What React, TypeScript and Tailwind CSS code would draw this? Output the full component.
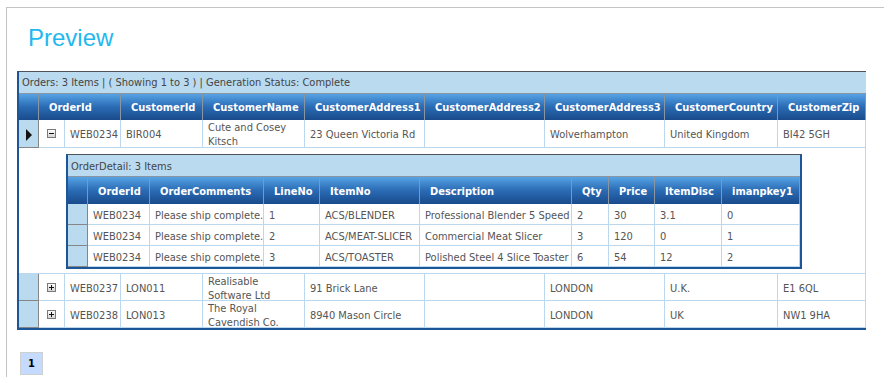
import React from 'react';

const outerCols = 'grid grid-cols-[20px_26px_56px_82px_102px_120px_120px_120px_113px_88px]';
const innerCols = 'grid grid-cols-[20px_62px_114px_56px_100px_152px_37px_46px_67px_78px]';
const headerBg = 'bg-linear-to-b from-[#56a3e5] via-[#2a6bb4] to-[#1a4b8c]';

type Order = {
  id: string;
  customerId: string;
  name: string[];
  addr1: string;
  addr2: string;
  addr3: string;
  country: string;
  zip: string;
};

const orders: Order[] = [
  { id: 'WEB0234', customerId: 'BIR004', name: ['Cute and Cosey', 'Kitsch'], addr1: '23 Queen Victoria Rd', addr2: '', addr3: 'Wolverhampton', country: 'United Kingdom', zip: 'BI42 5GH' },
  { id: 'WEB0237', customerId: 'LON011', name: ['Realisable', 'Software Ltd'], addr1: '91 Brick Lane', addr2: '', addr3: 'LONDON', country: 'U.K.', zip: 'E1 6QL' },
  { id: 'WEB0238', customerId: 'LON013', name: ['The Royal', 'Cavendish Co.'], addr1: '8940 Mason Circle', addr2: '', addr3: 'LONDON', country: 'UK', zip: 'NW1 9HA' },
];

const details = [
  ['WEB0234', 'Please ship complete.', '1', 'ACS/BLENDER', 'Professional Blender 5 Speed', '2', '30', '3.1', '0'],
  ['WEB0234', 'Please ship complete.', '2', 'ACS/MEAT-SLICER', 'Commercial Meat Slicer', '3', '120', '0', '1'],
  ['WEB0234', 'Please ship complete.', '3', 'ACS/TOASTER', 'Polished Steel 4 Slice Toaster', '6', '54', '12', '2'],
];

const Th = ({ children, wide }: { children?: React.ReactNode; wide?: boolean }) => (
  <div className={`flex items-center pl-[10px] pt-[3px] border-r border-[#8a95a2] font-bold text-white whitespace-nowrap overflow-hidden ${wide ? 'col-span-2' : ''}`}>
    {children}
  </div>
);

const Td = ({ children }: { children?: React.ReactNode }) => (
  <div className="flex items-center pl-[5px] pt-[3px] border-r border-b border-[#bcd8ee] text-[#555] leading-[14px] whitespace-nowrap overflow-hidden">
    {children}
  </div>
);

const Selector = ({ current }: { current?: boolean }) => (
  <div className="flex items-center justify-center pt-[2px] bg-[#badaef] border-r border-b border-[#868686]">
    {current && (
      <svg width="8" height="12" viewBox="0 0 8 12">
        <polygon points="1,0 7,6 1,12" fill="#111" />
      </svg>
    )}
  </div>
);

const ExpandBox = ({ open }: { open?: boolean }) => (
  <svg width="9" height="9" viewBox="0 0 9 9">
    <defs>
      <linearGradient id="xb" x1="0" y1="0" x2="0" y2="1">
        <stop offset="0" stopColor="#ffffff" />
        <stop offset="1" stopColor="#d2d2d2" />
      </linearGradient>
    </defs>
    <rect x="0.5" y="0.5" width="8" height="8" fill="url(#xb)" stroke="#7a7a7a" />
    <rect x="2" y="4" width="5" height="1" fill="#111" />
    {!open && <rect x="4" y="2" width="1" height="5" fill="#111" />}
  </svg>
);

const OrderRow = ({ o, open, current, h }: { o: Order; open?: boolean; current?: boolean; h: string }) => (
  <div className={`${outerCols} ${h}`}>
    <Selector current={current} />
    <div className="flex items-center justify-center border-r border-b border-[#bcd8ee]">
      <ExpandBox open={open} />
    </div>
    <Td>{o.id}</Td>
    <Td>{o.customerId}</Td>
    <Td>
      <span>
        {o.name[0]}
        <br />
        {o.name[1]}
      </span>
    </Td>
    <Td>{o.addr1}</Td>
    <Td>{o.addr2}</Td>
    <Td>{o.addr3}</Td>
    <Td>{o.country}</Td>
    <Td>{o.zip}</Td>
  </div>
);

const DetailGrid = () => (
  <div className="w-[736px] border-t border-t-[#4f5358] border-x-2 border-b-2 border-x-[#1c5696] border-b-[#1c5696]">
    <div className="h-[22px] flex items-center pl-[3px] pt-[3px] bg-[#badaef] border-b border-[#8a95a2] text-[#444]">
      OrderDetail: 3 Items
    </div>
    <div className={`${innerCols} h-[27px] ${headerBg}`}>
      <Th />
      {['OrderId', 'OrderComments', 'LineNo', 'ItemNo', 'Description', 'Qty', 'Price', 'ItemDisc', 'imanpkey1'].map((c) => (
        <Th key={c}>{c}</Th>
      ))}
    </div>
    {details.map((r, i) => (
      <div key={i} className={`${innerCols} h-[21px]`}>
        <Selector />
        {r.map((v, j) => (
          <Td key={j}>{v}</Td>
        ))}
      </div>
    ))}
  </div>
);

export default function App() {
  return (
    <div className="w-[894px] h-[383px] bg-white overflow-hidden font-['DejaVu_Sans_Condensed','DejaVu_Sans',Tahoma,sans-serif] text-[11px]">
      <div className="ml-[6px] mt-[7px] w-[878px] h-[370px] border-l border-t border-[#c4c4c4]">
        <h1 className="pt-[16px] pl-[21px] text-[24px] leading-[28px] text-[#1fb8ee] font-['Liberation_Sans',Arial,sans-serif]">
          Preview
        </h1>

        <div className="mt-[19px] ml-[10px] w-[849px] border-l-2 border-[#1c5696] border-b-2">
          <div className="h-[23px] flex items-center pl-[3px] pt-[2px] bg-[#badaef] border-t border-t-[#4f5358] border-b border-b-[#8a95a2] text-[#444] whitespace-nowrap">
            Orders: 3 Items | ( Showing 1 to 3 ) | Generation Status: Complete
          </div>
          <div className={`${outerCols} h-[26px] ${headerBg}`}>
            <Th />
            <Th wide>OrderId</Th>
            <Th>CustomerId</Th>
            <Th>CustomerName</Th>
            <Th>CustomerAddress1</Th>
            <Th>CustomerAddress2</Th>
            <Th>CustomerAddress3</Th>
            <Th>CustomerCountry</Th>
            <Th>CustomerZip</Th>
          </div>

          <OrderRow o={orders[0]} open current h="h-[28px]" />

          <div className="flex h-[126px] border-b border-r border-[#bcd8ee]">
            <div className="w-[20px] shrink-0" />
            <div className="pl-[27px] pt-[6px]">
              <DetailGrid />
            </div>
          </div>

          <OrderRow o={orders[1]} h="h-[27px]" />
          <OrderRow o={orders[2]} h="h-[27px]" />
        </div>

        <div className="mt-[22px] ml-[13px] w-[23px] h-[23px] flex items-center justify-center pt-[1px] bg-[#c4dbff] border border-[#cfcfcf] font-bold text-black">
          1
        </div>
      </div>
    </div>
  );
}
